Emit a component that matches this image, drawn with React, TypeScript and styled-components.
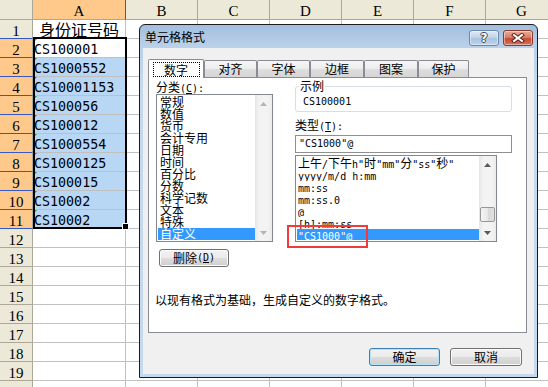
import React from 'react';
import styled, { createGlobalStyle, css } from 'styled-components';

const GlobalStyle = createGlobalStyle`
  html, body { margin: 0; padding: 0; background: #ffffff; }
  body { font-family: "Noto Sans CJK SC", sans-serif; }
  * { box-sizing: border-box; }
`;

const Page = styled.div`
  position: relative;
  width: 548px;
  height: 387px;
  overflow: hidden;
  background: #fff;
`;

/* ---------------- spreadsheet ---------------- */

const Sheet = styled.div`
  display: grid;
  grid-template-columns: 33px 93px repeat(6, 72px);
  grid-template-rows: 20px;
  grid-auto-rows: 19px;
  width: 558px;
`;

const Corner = styled.div`
  background: #ece9d8;
  border-right: 1px solid #aca899;
  border-bottom: 1px solid #aca899;
`;

const ColHead = styled.div<{ $sel?: boolean }>`
  background: ${p => (p.$sel ? '#ffc98c' : '#ece9d8')};
  border-right: 1px solid ${p => (p.$sel ? '#3658c4' : '#aca899')};
  border-bottom: 1px solid #aca899;
  font: 15px/18px "Liberation Serif", serif;
  padding-top: 2px;
  text-align: center;
  color: #000;
  overflow: hidden;
`;

const RowHead = styled.div<{ $sel?: boolean; $edge?: boolean }>`
  background: ${p => (p.$sel ? '#ffc98c' : '#ece9d8')};
  border-right: 1px solid #aca899;
  border-bottom: 1px solid ${p => (p.$sel || p.$edge ? '#3658c4' : '#aca899')};
  font: 15px/18px "Liberation Serif", serif;
  padding-top: 2px;
  text-align: center;
  color: #000;
  overflow: hidden;
`;

const Cell = styled.div<{ $sel?: boolean; $flag?: string; $cjk?: boolean }>`
  position: relative;
  background: ${p => (p.$sel ? '#b8d7f5' : '#fff')};
  border-right: 1px solid #c0c0c0;
  border-bottom: 1px solid #c0c0c0;
  color: #000;
  white-space: nowrap;
  overflow: hidden;
  ${p =>
    p.$cjk
      ? css`
          font: 16px/18px "Noto Sans CJK SC", sans-serif;
          text-align: center;
          padding: 0;
        `
      : css`
          font: 13.33px/18px "DejaVu Sans Mono", monospace;
          padding: 2px 0 0 1px;
        `}
  ${p =>
    p.$flag &&
    css`
      &::before {
        content: '';
        position: absolute;
        left: 0;
        top: 0;
        border-style: solid;
        border-width: 4px 4px 0 0;
        border-color: ${p.$flag} transparent transparent transparent;
      }
    `}
`;

const SelectionFrame = styled.div`
  position: absolute;
  left: 33px;
  top: 37px;
  width: 94px;
  height: 192px;
  border: 2px solid #000;
  pointer-events: none;
`;

const FillHandle = styled.div`
  position: absolute;
  left: 122px;
  top: 223px;
  width: 7px;
  height: 7px;
  background: #000;
  border: 1px solid #fff;
`;

/* ---------------- dialog ---------------- */

const Dialog = styled.div`
  position: absolute;
  left: 139px;
  top: 24px;
  width: 399px;
  height: 354px;
  border: 1px solid #1b1b1b;
  border-radius: 6px 6px 0 0;
  background: linear-gradient(180deg, #a3bedc 0px, #bad1ea 22px, #c5d9ee 60px, #c5d9ee 100%);
  padding: 0 3px 3px;
  display: flex;
  flex-direction: column;
  font-family: "Noto Sans CJK SC", sans-serif;
  font-size: 12px;
  color: #000;
  z-index: 2;
`;

const TitleBar = styled.div`
  height: 23px;
  display: flex;
  align-items: center;
  justify-content: space-between;
  padding: 2px 1px 0 2px;
`;

const TitleText = styled.div`
  font-size: 12px;
  line-height: 14px;
  margin-top: -2px;
`;

const CapButtons = styled.div`
  display: flex;
  gap: 4px;
`;

const CapButton = styled.div<{ $close?: boolean }>`
  width: 30px;
  height: 16px;
  border-radius: 3px;
  border: 1px solid ${p => (p.$close ? '#8b3a2d' : '#6b86a8')};
  background: ${p =>
    p.$close
      ? 'linear-gradient(180deg, #e9ab9b 0%, #d98069 45%, #c74a31 55%, #d6735b 100%)'
      : 'linear-gradient(180deg, #dfe9f5 0%, #c1d5eb 45%, #a9c3e0 55%, #bed3ea 100%)'};
  box-shadow: inset 0 0 0 1px rgba(255, 255, 255, 0.45);
  display: flex;
  align-items: center;
  justify-content: center;
`;

const HelpGlyph = styled.span`
  font: bold 12px/12px "DejaVu Sans", sans-serif;
  color: #fff;
  text-shadow: 1px 0 0 #34465e, -1px 0 0 #34465e, 0 1px 0 #34465e, 0 -1px 0 #34465e;
`;

const Body = styled.div`
  flex: 1;
  background: #f0f0f0;
  padding: 11px 0 0 5px;
  display: flex;
  flex-direction: column;
`;

const TabRow = styled.div`
  display: flex;
  align-items: flex-end;
  height: 18px;
  position: relative;
  z-index: 1;
`;

const Tab = styled.div<{ $w: number; $active?: boolean }>`
  width: ${p => p.$w}px;
  height: ${p => (p.$active ? 19 : 17)}px;
  margin-bottom: ${p => (p.$active ? -1 : 0)}px;
  border: 1px solid #898c95;
  border-bottom: none;
  border-radius: 2px 2px 0 0;
  background: ${p =>
    p.$active ? '#ffffff' : 'linear-gradient(180deg, #f6f6f6 0%, #ececec 50%, #dedede 51%, #d5d5d5 100%)'};
  display: flex;
  align-items: center;
  justify-content: center;
  font-size: 12px;
  line-height: 14px;
`;

const FocusRect = styled.div`
  width: 47px;
  height: 15px;
  border: 1px dotted #000;
  display: flex;
  align-items: center;
  justify-content: center;
  margin-top: 1px;
`;

const Panel = styled.div`
  width: 379px;
  height: 256px;
  background: #fff;
  border: 1px solid #898c95;
  padding: 2px 0 0 7px;
  display: flex;
  flex-direction: column;
`;

const Columns = styled.div`
  display: flex;
  gap: 22px;
`;

const LeftCol = styled.div`
  width: 117px;
  display: flex;
  flex-direction: column;
`;

const RightCol = styled.div`
  width: 217px;
  display: flex;
  flex-direction: column;
`;

const Label = styled.div<{ $gap?: number }>`
  line-height: 14px;
  height: 14px;
  white-space: nowrap;
  margin-top: ${p => p.$gap ?? 0}px;
`;

const Latin = styled.span`
  font-family: "DejaVu Sans Mono", monospace;
  font-size: 10px;
`;

const Under = styled.span`
  text-decoration: underline;
`;

const ListBox = styled.div<{ $w: number; $h: number; $mt?: number }>`
  width: ${p => p.$w}px;
  height: ${p => p.$h}px;
  margin-top: ${p => p.$mt ?? 0}px;
  border: 1px solid #828790;
  padding: 1px 0 1px 1px;
  display: flex;
  background: #fff;
`;

const Items = styled.div`
  flex: 1;
  overflow: hidden;
`;

const Item = styled.div<{ $sel?: boolean; $pad?: number }>`
  height: 12px;
  line-height: 12px;
  font-size: 12px;
  white-space: nowrap;
  overflow: hidden;
  padding-left: ${p => p.$pad ?? 2}px;
  background: ${p => (p.$sel ? '#3399ff' : 'transparent')};
  color: ${p => (p.$sel ? '#fff' : '#000')};
`;

const Scroll = styled.div`
  width: 17px;
  margin: -1px 0 -1px 0;
  display: flex;
  flex-direction: column;
  background: linear-gradient(90deg, #e6e6e6 0%, #f3f3f3 25%, #f3f3f3 75%, #ebebeb 100%);
`;

const ScrollBtn = styled.div`
  height: 17px;
  display: flex;
  align-items: center;
  justify-content: center;
`;

const ScrollTrack = styled.div`
  flex: 1;
  display: flex;
  flex-direction: column;
  justify-content: flex-end;
  align-items: center;
  padding-bottom: 2px;
`;

const Thumb = styled.div`
  width: 15px;
  height: 15px;
  border: 1px solid #979797;
  border-radius: 2px;
  background: linear-gradient(90deg, #f4f4f4 0%, #e8e8e8 50%, #d6d6d6 51%, #e2e2e2 100%);
`;

const PushButton = styled.div<{ $w: number; $default?: boolean; $ml?: number; $mt?: number }>`
  width: ${p => p.$w}px;
  height: 18px;
  margin-left: ${p => p.$ml ?? 0}px;
  margin-top: ${p => p.$mt ?? 0}px;
  border: 1px solid ${p => (p.$default ? '#3c7fb1' : '#707070')};
  border-radius: 3px;
  background: linear-gradient(180deg, #f2f2f2 0%, #ebebeb 49%, #dddddd 50%, #cfcfcf 100%);
  box-shadow: inset 0 0 0 1px ${p => (p.$default ? '#b6e3f9' : '#fbfbfb')};
  font-size: 12px;
  line-height: 14px;
  display: flex;
  align-items: center;
  justify-content: center;
  white-space: nowrap;
`;

const Group = styled.fieldset`
  margin: 0;
  padding: 4px 0 3px 3px;
  border: 1px solid #d5dfe5;
  border-radius: 3px;
  min-width: 0;
`;

const GroupLegend = styled.legend`
  padding: 0 1px;
  font-size: 12px;
  line-height: 12px;
`;

const SampleText = styled.div`
  margin-left: 4px;
  line-height: 12px;
  font-family: "DejaVu Sans Mono", monospace;
  font-size: 10px;
`;

const TextBox = styled.div`
  width: 217px;
  height: 18px;
  margin-top: 3px;
  border: 1px solid #8e8f8f;
  padding-left: 3px;
  line-height: 16px;
  font-family: "DejaVu Sans Mono", monospace;
  font-size: 10px;
  background: #fff;
`;

const Description = styled.div`
  margin-top: 26px;
  margin-left: -1px;
  line-height: 14px;
  font-size: 12px;
`;

const ButtonRow = styled.div`
  display: flex;
  justify-content: flex-end;
  gap: 10px;
  margin-top: 15px;
  padding-right: 12px;
`;

const Annotation = styled.div`
  position: absolute;
  left: 287px;
  top: 225px;
  width: 81px;
  height: 23px;
  border: 2px solid #ef3b3b;
  z-index: 3;
`;

/* ---------------- helpers ---------------- */

const CJK = /[\u3000-\u9fff\uff00-\uffef]/;

function mixed(s: string) {
  const parts = s.match(/[\u3000-\u9fff\uff00-\uffef]+|[^\u3000-\u9fff\uff00-\uffef]+/g) || [];
  return parts.map((p, i) => (CJK.test(p) ? <span key={i}>{p}</span> : <Latin key={i}>{p}</Latin>));
}

const Arrow = ({ up, color }: { up?: boolean; color: string }) => (
  <svg width="7" height="4" viewBox="0 0 7 4">
    <path d={up ? 'M0 4 L3.5 0 L7 4 Z' : 'M0 0 L3.5 4 L7 0 Z'} fill={color} />
  </svg>
);

const CloseX = () => (
  <svg width="14" height="10" viewBox="0 0 14 10">
    <path d="M3 2 L11 8 M11 2 L3 8" stroke="#5a2418" strokeWidth="4" strokeLinecap="square" />
    <path d="M3 2 L11 8 M11 2 L3 8" stroke="#ffffff" strokeWidth="2" strokeLinecap="square" />
  </svg>
);

/* ---------------- data ---------------- */

const COLS = ['A', 'B', 'C', 'D', 'E', 'F', 'G'];
const COLUMN_A = [
  '身份证号码',
  'CS100001',
  'CS1000552',
  'CS10001153',
  'CS100056',
  'CS100012',
  'CS1000554',
  'CS1000125',
  'CS100015',
  'CS10002',
  'CS10002',
];

const TABS: [string, number][] = [
  ['数字', 56],
  ['对齐', 53],
  ['字体', 53],
  ['边框', 54],
  ['图案', 54],
  ['保护', 51],
];

const CATEGORIES = ['常规', '数值', '货币', '会计专用', '日期', '时间', '百分比', '分数', '科学记数', '文本', '特殊', '自定义'];

const TYPES = ['上午/下午h"时"mm"分"ss"秒"', 'yyyy/m/d h:mm', 'mm:ss', 'mm:ss.0', '@', '[h]:mm:ss', '"CS1000"@'];

export default function App() {
  const rows = Array.from({ length: 20 }, (_, i) => i + 1);
  return (
    <Page>
      <GlobalStyle />
      <Sheet>
        <Corner />
        {COLS.map(c => (
          <ColHead key={c} $sel={c === 'A'}>
            {c}
          </ColHead>
        ))}
        {rows.map(r => (
          <React.Fragment key={r}>
            <RowHead $sel={r >= 2 && r <= 11} $edge={r === 1}>
              {r}
            </RowHead>
            {COLS.map(c => {
              if (c === 'A' && r <= 11) {
                const isData = r >= 2;
                return (
                  <Cell
                    key={c}
                    $cjk={r === 1}
                    $sel={r >= 3}
                    $flag={isData ? (r === 2 ? '#c64fc6' : '#1f9d1f') : undefined}
                  >
                    {COLUMN_A[r - 1]}
                  </Cell>
                );
              }
              return <Cell key={c} />;
            })}
          </React.Fragment>
        ))}
      </Sheet>
      <SelectionFrame />
      <FillHandle />

      <Dialog>
        <TitleBar>
          <TitleText>单元格格式</TitleText>
          <CapButtons>
            <CapButton>
              <HelpGlyph>?</HelpGlyph>
            </CapButton>
            <CapButton $close>
              <CloseX />
            </CapButton>
          </CapButtons>
        </TitleBar>
        <Body>
          <TabRow>
            {TABS.map(([t, w], i) =>
              i === 0 ? (
                <Tab key={t} $w={w} $active>
                  <FocusRect>{t}</FocusRect>
                </Tab>
              ) : (
                <Tab key={t} $w={w}>
                  {t}
                </Tab>
              )
            )}
          </TabRow>
          <Panel>
            <Columns>
              <LeftCol>
                <Label>
                  分类
                  <Latin>
                    (<Under>C</Under>):
                  </Latin>
                </Label>
                <ListBox $w={117} $h={148}>
                  <Items>
                    {CATEGORIES.map(c => (
                      <Item key={c} $sel={c === '自定义'} $pad={2}>
                        {c}
                      </Item>
                    ))}
                  </Items>
                  <Scroll>
                    <ScrollBtn>
                      <Arrow up color="#b4b4b4" />
                    </ScrollBtn>
                    <ScrollTrack />
                    <ScrollBtn>
                      <Arrow color="#b4b4b4" />
                    </ScrollBtn>
                  </Scroll>
                </ListBox>
                <PushButton $w={70} $ml={3} $mt={7}>
                  删除
                  <Latin>
                    (<Under>D</Under>)
                  </Latin>
                </PushButton>
              </LeftCol>
              <RightCol>
                <Group>
                  <GroupLegend>示例</GroupLegend>
                  <SampleText>CS100001</SampleText>
                </Group>
                <Label $gap={6}>
                  类型
                  <Latin>
                    (<Under>T</Under>):
                  </Latin>
                </Label>
                <TextBox>"CS1000"@</TextBox>
                <ListBox $w={202} $h={87} $mt={2}>
                  <Items>
                    {TYPES.map(t => (
                      <Item key={t} $sel={t === '"CS1000"@'} $pad={1}>
                        {mixed(t)}
                      </Item>
                    ))}
                  </Items>
                  <Scroll>
                    <ScrollBtn>
                      <Arrow up color="#5a5a5a" />
                    </ScrollBtn>
                    <ScrollTrack>
                      <Thumb />
                    </ScrollTrack>
                    <ScrollBtn>
                      <Arrow color="#5a5a5a" />
                    </ScrollBtn>
                  </Scroll>
                </ListBox>
              </RightCol>
            </Columns>
            <Description>以现有格式为基础，生成自定义的数字格式。</Description>
          </Panel>
          <ButtonRow>
            <PushButton $w={71} $default>
              确定
            </PushButton>
            <PushButton $w={72}>取消</PushButton>
          </ButtonRow>
        </Body>
      </Dialog>
      <Annotation />
    </Page>
  );
}
